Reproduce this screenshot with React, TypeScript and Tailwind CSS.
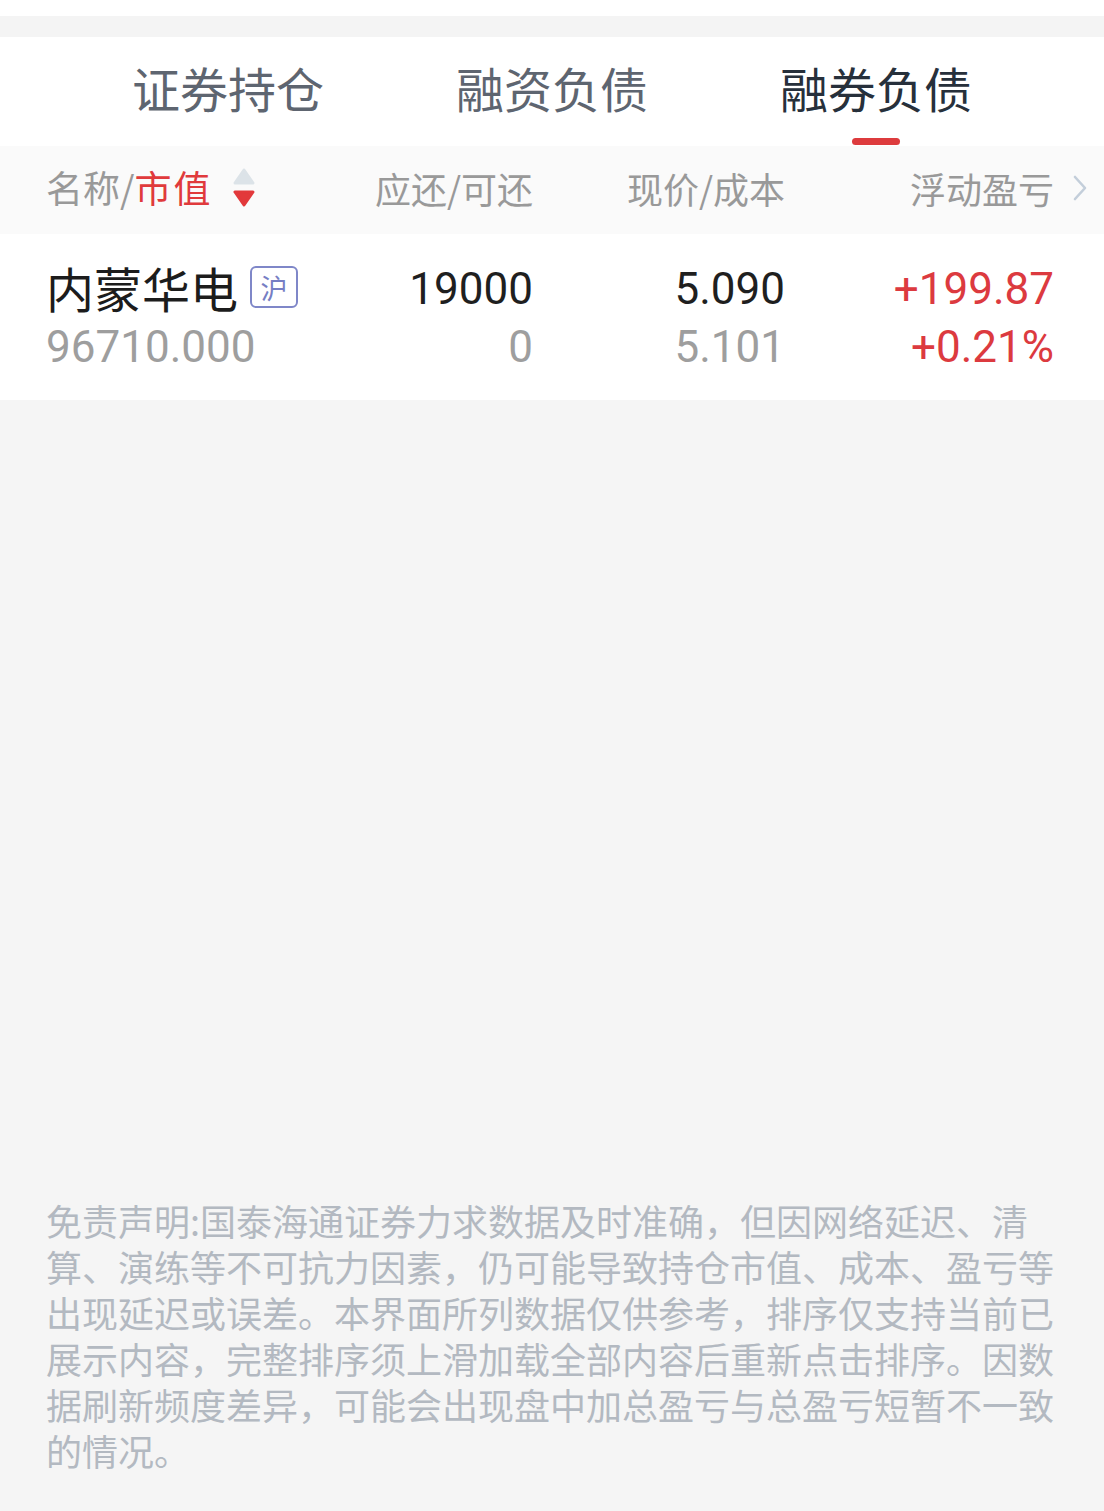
import React from "react";

const CJK = { fontFamily: '"Noto Sans CJK SC", "Noto Sans", sans-serif' };
const NUM = { fontFamily: 'Roboto, "Noto Sans CJK SC", sans-serif' };

function SortIcon() {
  return (
    <svg width="22" height="40" viewBox="0 0 22 40" className="ml-[20px]">
      <path d="M11 2 L20 15 L2 15 Z" fill="#dce3e8" stroke="#dce3e8" strokeWidth="3" strokeLinejoin="round" />
      <path d="M2 24 L20 24 L11 37 Z" fill="#e2393b" stroke="#e2393b" strokeWidth="3" strokeLinejoin="round" />
    </svg>
  );
}

function Chevron() {
  return (
    <svg width="14" height="26" viewBox="0 0 14 26">
      <path d="M2 2 L12 13 L2 24" fill="none" stroke="#c3ceda" strokeWidth="2.6" strokeLinecap="round" strokeLinejoin="round" />
    </svg>
  );
}

export default function App() {
  const tabs = [
    { label: "证券持仓", active: false },
    { label: "融资负债", active: false },
    { label: "融券负债", active: true },
  ];
  return (
    <div className="w-[1104px] h-[1511px] flex flex-col bg-[#f5f5f5]" style={CJK}>
      <div className="h-[16px] bg-white" />
      <div className="h-[21px] bg-[#f4f4f4]" />
      {/* tabs */}
      <div className="h-[109px] bg-white grid grid-cols-3 px-[66px]">
        {tabs.map((t) => (
          <div key={t.label} className="relative flex items-center justify-center pb-[10px]">
            <span
              className={`text-[48px] leading-none ${t.active ? "text-[#27303b]" : "text-[#5e6570]"}`}
            >
              {t.label}
            </span>
            {t.active && (
              <div className="absolute bottom-[1px] left-1/2 -translate-x-1/2 w-[48px] h-[7px] rounded-full bg-[#dd3b3d]" />
            )}
          </div>
        ))}
      </div>
      {/* header row */}
      <div className="h-[88px] bg-[#fafafa] grid grid-cols-[280px_207px_252px_269px_1fr] pl-[46px] pb-[4px] items-center text-[36px] text-[#999999]">
        <div className="flex items-center text-[37px]">
          <span>名称/</span>
          <span className="text-[#e03a3c] tracking-[2px]">市值</span>
          <SortIcon />
        </div>
        <div className="text-right">应还/可还</div>
        <div className="text-right">现价/成本</div>
        <div className="text-right">浮动盈亏</div>
        <div className="flex items-center pl-[19px]">
          <Chevron />
        </div>
      </div>
      {/* data row */}
      <div className="h-[166px] bg-white grid grid-cols-[280px_207px_252px_269px_1fr] pl-[46px] pt-[26px]">
        <div className="flex flex-col">
          <div className="h-[58px] flex items-center pb-[4px]">
            <span className="text-[48px] leading-none text-[#1c1c1c]">内蒙华电</span>
            <span className="ml-[12px] w-[48px] h-[42px] border-2 border-[#7f87c8] rounded-[6px] flex items-center justify-center text-[27px] leading-none text-[#767ec4]">
              沪
            </span>
          </div>
          <div className="h-[58px] leading-[58px] text-[44px] text-[#9e9e9e]" style={NUM}>
            96710.000
          </div>
        </div>
        <div className="flex flex-col items-end text-[44px] leading-[58px]" style={NUM}>
          <div className="text-[#1f1f1f]">19000</div>
          <div className="text-[#9e9e9e]">0</div>
        </div>
        <div className="flex flex-col items-end text-[44px] leading-[58px]" style={NUM}>
          <div className="text-[#1f1f1f]">5.090</div>
          <div className="text-[#9e9e9e]">5.101</div>
        </div>
        <div className="flex flex-col items-end text-[44px] leading-[58px] text-[#dc3a3f]" style={NUM}>
          <div>+199.87</div>
          <div>+0.21%</div>
        </div>
        <div />
      </div>
      <div className="flex-1" />
      {/* disclaimer */}
      <div className="px-[46px] pb-[38px] text-[36px] leading-[46px] text-[#b3b9c1]">
        免责声明:国泰海通证券力求数据及时准确，但因网络延迟、清
        <br />
        算、演练等不可抗力因素，仍可能导致持仓市值、成本、盈亏等
        <br />
        出现延迟或误差。本界面所列数据仅供参考，排序仅支持当前已
        <br />
        展示内容，完整排序须上滑加载全部内容后重新点击排序。因数
        <br />
        据刷新频度差异，可能会出现盘中加总盈亏与总盈亏短暂不一致
        <br />
        的情况。
      </div>
    </div>
  );
}
